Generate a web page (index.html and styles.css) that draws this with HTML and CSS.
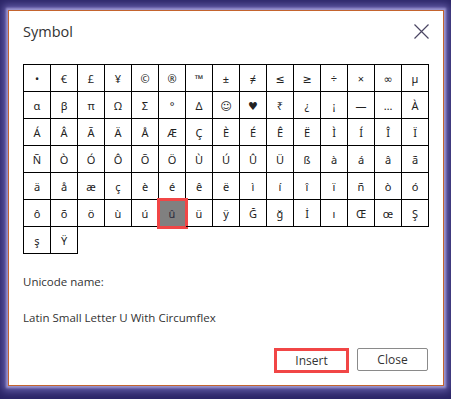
FILE: index.html
```html
<!DOCTYPE html>
<html lang="en">
<head>
    <meta charset="UTF-8">
    <title>Symbol</title>
    <link rel="stylesheet" href="styles.css">
</head>
<body>
    <div class="dialog">
        <div class="dialog-header">
            <h2>Symbol</h2>
            <button class="close-x" aria-label="Close">
                <svg width="15" height="15" viewBox="0 0 15 15">
                    <path d="M0.5 0.5 L14.5 14.5 M14.5 0.5 L0.5 14.5" stroke="#4b4663" stroke-width="1.2" fill="none"/>
                </svg>
            </button>
        </div>

        <div class="symbol-grid">
            <div class="cell">•</div><div class="cell">€</div><div class="cell">£</div><div class="cell">¥</div><div class="cell">©</div>
            <div class="cell">®</div><div class="cell">™</div><div class="cell">±</div><div class="cell">≠</div><div class="cell">≤</div>
            <div class="cell">≥</div><div class="cell">÷</div><div class="cell">×</div><div class="cell">∞</div><div class="cell">µ</div>

            <div class="cell">α</div><div class="cell">β</div><div class="cell">π</div><div class="cell">Ω</div><div class="cell">Σ</div>
            <div class="cell">°</div><div class="cell">Δ</div><div class="cell">☺</div><div class="cell">♥</div><div class="cell">₹</div>
            <div class="cell">¿</div><div class="cell">¡</div><div class="cell">—</div><div class="cell">…</div><div class="cell">À</div>

            <div class="cell">Á</div><div class="cell">Â</div><div class="cell">Ã</div><div class="cell">Ä</div><div class="cell">Å</div>
            <div class="cell">Æ</div><div class="cell">Ç</div><div class="cell">È</div><div class="cell">É</div><div class="cell">Ê</div>
            <div class="cell">Ë</div><div class="cell">Ì</div><div class="cell">Í</div><div class="cell">Î</div><div class="cell">Ï</div>

            <div class="cell">Ñ</div><div class="cell">Ò</div><div class="cell">Ó</div><div class="cell">Ô</div><div class="cell">Õ</div>
            <div class="cell">Ö</div><div class="cell">Ù</div><div class="cell">Ú</div><div class="cell">Û</div><div class="cell">Ü</div>
            <div class="cell">ß</div><div class="cell">à</div><div class="cell">á</div><div class="cell">â</div><div class="cell">ã</div>

            <div class="cell">ä</div><div class="cell">å</div><div class="cell">æ</div><div class="cell">ç</div><div class="cell">è</div>
            <div class="cell">é</div><div class="cell">ê</div><div class="cell">ë</div><div class="cell">ì</div><div class="cell">í</div>
            <div class="cell">î</div><div class="cell">ï</div><div class="cell">ñ</div><div class="cell">ò</div><div class="cell">ó</div>

            <div class="cell">ô</div><div class="cell">õ</div><div class="cell">ö</div><div class="cell">ù</div><div class="cell">ú</div>
            <div class="cell selected">û</div><div class="cell">ü</div><div class="cell">ÿ</div><div class="cell">Ğ</div><div class="cell">ğ</div>
            <div class="cell">İ</div><div class="cell">ı</div><div class="cell">Œ</div><div class="cell">œ</div><div class="cell">Ş</div>

            <div class="cell">ş</div><div class="cell">Ÿ</div>
        </div>

        <p class="label">Unicode name:</p>
        <p class="char-name">Latin Small Letter U With Circumflex</p>

        <div class="actions">
            <button class="btn btn-insert">Insert</button>
            <button class="btn btn-close">Close</button>
        </div>
    </div>
</body>
</html>
```

FILE: styles.css
```css
* {
    margin: 0;
    padding: 0;
    box-sizing: border-box;
}

body {
    width: 451px;
    height: 399px;
    padding: 10px 0 0 8px;
    background: #2a2466;
    font-family: 'Open Sans', 'Noto Sans', sans-serif;
    color: #333;
    overflow: hidden;
}

.dialog {
    width: 436px;
    height: 376px;
    padding: 10px 14px 0 14px;
    background: #fff;
    border: 1px solid #c4642e;
    box-shadow: 0 0 2px 2px #9a94cf, 0 0 8px 5px rgba(125, 118, 195, 0.75);
}

.dialog-header {
    display: flex;
    justify-content: space-between;
    align-items: center;
    height: 20px;
}

.dialog-header h2 {
    font-size: 14.5px;
    font-weight: 400;
    color: #333;
}

.close-x {
    display: flex;
    border: none;
    background: none;
}

.symbol-grid {
    display: grid;
    grid-template-columns: repeat(15, 27px);
    grid-auto-rows: 27px;
    width: 406px;
    margin-top: 23px;
    border-top: 1px solid #000;
    border-left: 1px solid #000;
}

.cell {
    display: flex;
    justify-content: center;
    align-items: center;
    border-right: 1px solid #000;
    border-bottom: 1px solid #000;
    font-family: 'Noto Sans', 'DejaVu Sans', sans-serif;
    font-size: 11px;
    color: #222;
}

.cell.selected {
    background: #808080;
    color: #2a2a3a;
    outline: 3px solid #f14646;
    outline-offset: -1px;
}

.label,
.char-name {
    font-size: 11.5px;
    line-height: 16px;
    color: #333;
}

.label {
    margin-top: 20px;
}

.char-name {
    margin-top: 20px;
}

.actions {
    display: flex;
    justify-content: flex-end;
    align-items: flex-start;
    gap: 8px;
    margin-top: 22px;
    padding-right: 1px;
}

.btn {
    font-family: inherit;
    font-size: 12px;
    color: #333;
    background: #fff;
    cursor: pointer;
}

.btn-insert {
    width: 75px;
    height: 25px;
    border: 3px solid #f14646;
}

.btn-close {
    width: 71px;
    height: 23px;
    border: 1px solid #8a8a8a;
    border-radius: 2px;
}
```
